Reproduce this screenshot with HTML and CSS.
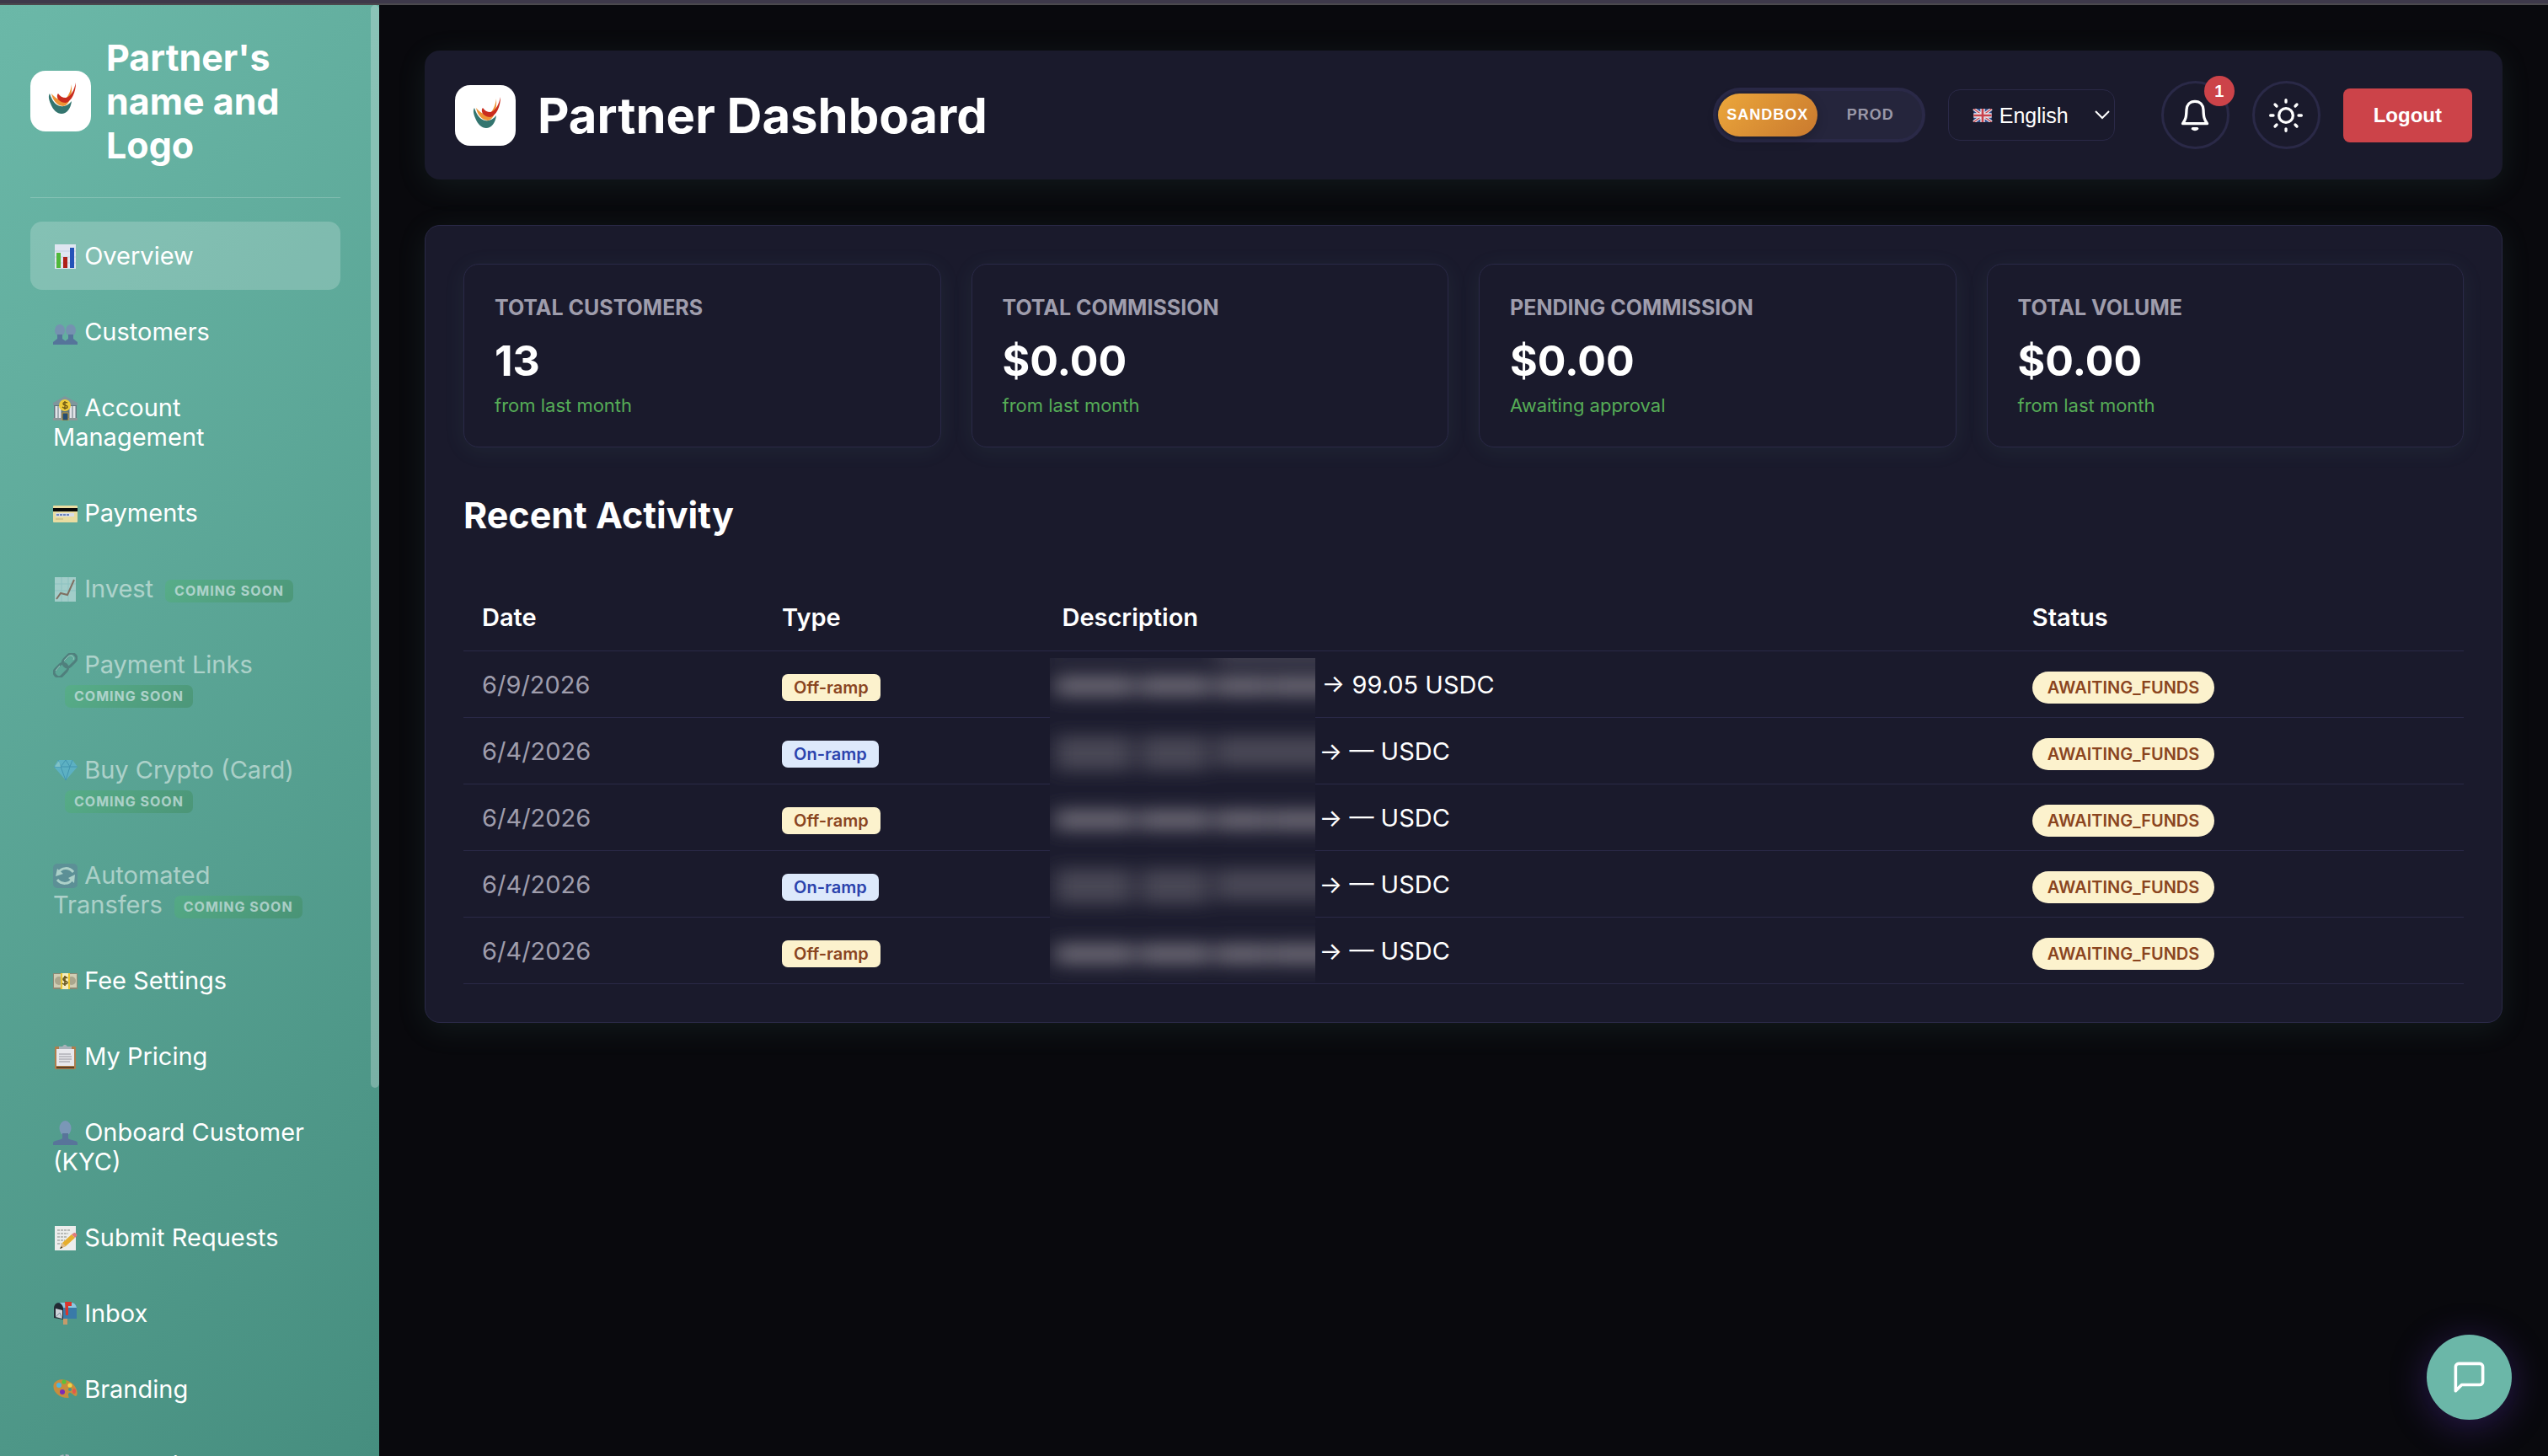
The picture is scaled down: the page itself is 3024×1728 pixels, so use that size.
FILE: index.html
```html
<!DOCTYPE html>
<html lang="en">

<head>
	<meta charset="UTF-8">
	<meta name="viewport" content="width=device-width, initial-scale=1.0">
	<title>Partner Dashboard</title>
	<link rel="stylesheet" href="styles.css">
</head>

<body>

	<div class="top-strip"></div>
	<div class="layout">

		<aside class="sidebar">
			<div class="brand">
				<svg class="logo" viewBox="0 0 72 72" aria-hidden="true">
					<rect width="72" height="72" rx="18" fill="#fff" />
					<path d="M23 27c-2 3-1 7 1 12 3 8 8 12 13 12 6 0 11-6 12-15-4 5-9 7-13 6-6-1-10-6-13-15z" fill="#34756f" />
					<path d="M25 27c1 6 6 15 14 15 7-1 11-12 10-26-1 8-4 15-9 19-6 0-11-3-15-8z" fill="#ee9335" />
					<path d="M33 27c-2 2-1 5 0 7 3 3 6 4 9 4 7-2 12-12 12-24-2 9-6 17-12 18-4 0-7-2-9-5z" fill="#c92c1e" />
				</svg>
				<h2>Partner's name and Logo</h2>
			</div>
			<nav class="nav">
				<a class="nav-item active" href="#overview"><svg class="icon" viewBox="0 0 29 29"><rect x="2" width="25" height="29" fill="#dfe6f1" /><path d="M2 8h25M2 15h25M2 22h25" stroke="#c5d0e2" /><rect x="4" y="10" width="5" height="18" fill="#50b83a" /><rect x="12" y="15" width="5" height="13" fill="#ae2018" /><rect x="20" y="4" width="5" height="24" fill="#2453b8" /></svg> Overview</a>
				<a class="nav-item" href="#customers"><svg class="icon" viewBox="0 0 29 29"><ellipse cx="8" cy="12" rx="6" ry="7" fill="#7592b0" /><ellipse cx="21" cy="12" rx="6" ry="7" fill="#7592b0" /><path d="M5 17h6v5l4 3v4H0v-3l5-4zM18 17h6v5l5 4v3H14v-4l4-3z" fill="#55749a" /></svg> Customers</a>
				<a class="nav-item" href="#accounts"><svg class="icon" viewBox="0 0 29 29"><path d="M14 0L0 8v3h29V8z" fill="#7f969c" /><path d="M1 11h27v15H1z" fill="#60757d" /><path d="M4 12v15M8 12v15M21 12v15M25 12v15" stroke="#e3e4e8" stroke-width="3" /><path d="M0 26h29v3H0z" fill="#8c9798" /><path d="M11 20h7v9h-7z" fill="#244d73" stroke="#c69a35" /><circle cx="14" cy="11" r="7" fill="#efcc3b" /><path d="M17 8c-2-1-5-1-5 1 0 3 5 1 5 4 0 2-4 2-6 0M14 6v10" fill="none" stroke="#705915" stroke-width="1.4" /></svg> Account Management</a>
				<a class="nav-item" href="#payments"><svg class="icon" viewBox="0 0 29 29"><rect y="5" width="29" height="20" rx="1" fill="#e9dca1" /><path d="M0 8h29v4H0z" fill="#080808" /><path d="M3 14h22v4H3z" fill="#d7dce9" /><path d="M4 16h15" stroke="#6c83bd" stroke-width="2" stroke-dasharray="3 1" /><path d="M3 21h9" stroke="#c5b378" /></svg> Payments</a>
				<a class="nav-item disabled" href="#invest"><svg class="icon" viewBox="0 0 29 29"><rect x="2" width="25" height="29" fill="#e5f2fa" /><path d="M2 8h25M2 16h25M10 0v29M18 0v29" stroke="#bddbe8" /><path d="M4 26l5-7 8 2 8-18" fill="none" stroke="#a0392d" stroke-width="2" /></svg> Invest<span class="soon">Coming soon</span></a>
				<a class="nav-item disabled" href="#links"><svg class="icon" viewBox="0 0 29 29"><g fill="none" stroke="#445963" stroke-width="3"><rect x="11" y="3" width="18" height="11" rx="5" transform="rotate(-45 20 9)" /><rect x="0" y="15" width="18" height="11" rx="5" transform="rotate(-45 9 20)" /></g><path d="M13 9l5-5c3-3 8 1 6 4M3 21l5-6" fill="none" stroke="#dde7e7" /></svg> Payment Links<span class="soon">Coming soon</span></a>
				<a class="nav-item disabled" href="#crypto"><svg class="icon" viewBox="0 0 29 29"><path d="M6 2h17l6 8-14 16L1 10z" fill="#5fbcf0" /><path d="M6 2l3 8 6-8 5 8 3-8M1 10h28M9 10l6 16 5-16" fill="none" stroke="#2b86ca" /><path d="M2 10l5-7 2 7z" fill="#a8e0f6" /></svg> Buy Crypto (Card)<span class="soon">Coming soon</span></a>
				<a class="nav-item disabled" href="#transfers"><svg class="icon" viewBox="0 0 29 29"><rect width="29" height="29" rx="5" fill="#607e99" /><path d="M6 11c4-7 13-7 18-1M23 18c-4 7-13 7-18 1" fill="none" stroke="#fff" stroke-width="3" /><path d="M3 15l2-9 7 6zM26 13l-1 10-7-6z" fill="#fff" /></svg> Automated Transfers<span class="soon">Coming soon</span></a>
				<a class="nav-item" href="#fees"><svg class="icon" viewBox="0 0 29 29"><rect y="5" width="29" height="19" fill="#8b8974" /><rect x="1" y="6" width="27" height="16" fill="#d1cdb4" /><circle cx="7" cy="14" r="5" fill="#aaa68d" /><circle cx="22" cy="14" r="5" fill="#aaa68d" /><path d="M10 5h9v19h-9z" fill="#f6edbd" /><path d="M10 5v19M19 5v19" stroke="#eac632" stroke-width="2" /><path d="M17 11c-2-2-5-1-5 1 0 3 5 2 5 4s-4 3-6 1M14 8v12" fill="none" stroke="#64531c" stroke-width="1.6" /></svg> Fee Settings</a>
				<a class="nav-item" href="#pricing"><svg class="icon" viewBox="0 0 29 29"><rect x="2" y="2" width="25" height="27" rx="1" fill="#ad7e4d" /><path d="M4 5h21v20H4z" fill="#e8e8ec" /><path d="M7 11h14M7 14h15M7 17h15M7 20h13" stroke="#bebec4" stroke-width="2" /><path d="M7 2h4l3-3 3 3h5v3H7z" fill="#a8b1b9" /><path d="M4 27h21" stroke="#604127" stroke-width="2" /></svg> My Pricing</a>
				<a class="nav-item" href="#onboard"><svg class="icon" viewBox="0 0 29 29"><ellipse cx="14.5" cy="9" rx="7" ry="9" fill="#7a97b7" /><path d="M11 15h7v6c1 2 10 2 11 5v3H0v-3c1-3 10-3 11-5z" fill="#58749a" /></svg> Onboard Customer (KYC)</a>
				<a class="nav-item" href="#requests"><svg class="icon" viewBox="0 0 29 29"><rect x="2" width="25" height="29" fill="#ecedec" /><path d="M5 5h15M5 9h13M5 13h12M5 17h9M5 21h5" stroke="#858985" stroke-dasharray="3 1" /><path d="M8 27l3-7 11-10 4 4-11 10z" fill="#e6ae2e" /><path d="M8 27l3-7 4 4z" fill="#dfbb8a" /><path d="M8 27l2-3 1 2z" fill="#302c28" /><path d="M22 10l3-2c2 0 4 2 3 4l-2 2z" fill="#df7a7a" /></svg> Submit Requests</a>
				<a class="nav-item" href="#inbox"><svg class="icon" viewBox="0 0 29 29"><path d="M12 19h5v8h-5z" fill="#c49b6b" /><path d="M6 1h16c4 0 6 4 6 7v12H11z" fill="#397aa8" /><path d="M8 1h14c3 0 5 2 6 6H12z" fill="#8dc8df" /><path d="M1 19V8c0-9 10-9 11 0v13z" fill="#222b34" /><path d="M3 8l8 2v10l-8-2z" fill="#cdd3d9" /><path d="M3 18l5-5 3 7" fill="none" stroke="#81909d" /><path d="M14 0h8v5h-4v11h-3z" fill="#d9362d" /></svg> Inbox</a>
				<a class="nav-item" href="#branding"><svg class="icon" viewBox="0 0 29 29"><path d="M1 7C5 0 17 1 24 8c5 5 6 13 3 14-3 0-5-5-8-4-3 2 2 7-2 6C7 24-2 16 1 7z" fill="#c78d3d" /><circle cx="20" cy="14" r="2" fill="#49958a" /><circle cx="7" cy="9" r="3" fill="#50b6e0" /><circle cx="13" cy="5" r="2.6" fill="#58c13c" /><circle cx="20" cy="9" r="2.6" fill="#eed447" /><circle cx="11" cy="17" r="3" fill="#7c28b8" /><ellipse cx="25" cy="16" rx="2" ry="3" fill="#e4584c" /></svg> Branding</a>
				<a class="nav-item" href="#settings"><svg class="icon" viewBox="0 0 29 29"><circle cx="14.5" cy="14.5" r="11.5" fill="none" stroke="#a9b2bc" stroke-width="4" stroke-dasharray="4 2" /><circle cx="14.5" cy="14.5" r="8" fill="none" stroke="#8b96a3" stroke-width="4" /></svg> My Settings</a>
			</nav>
			<div class="scroll-thumb"></div>
		</aside>

		<main class="main">
			<header class="header">
				<svg class="logo" viewBox="0 0 72 72" aria-hidden="true">
					<rect width="72" height="72" rx="18" fill="#fff" />
					<path d="M23 27c-2 3-1 7 1 12 3 8 8 12 13 12 6 0 11-6 12-15-4 5-9 7-13 6-6-1-10-6-13-15z" fill="#34756f" />
					<path d="M25 27c1 6 6 15 14 15 7-1 11-12 10-26-1 8-4 15-9 19-6 0-11-3-15-8z" fill="#ee9335" />
					<path d="M33 27c-2 2-1 5 0 7 3 3 6 4 9 4 7-2 12-12 12-24-2 9-6 17-12 18-4 0-7-2-9-5z" fill="#c92c1e" />
				</svg>
				<h1>Partner Dashboard</h1>
				<div class="controls">
					<div class="env-toggle">
						<button class="env selected" type="button">SANDBOX</button>
						<button class="env" type="button">PROD</button>
					</div>
					<div class="language">
						<svg class="flag" viewBox="0 0 24 18" aria-hidden="true">
							<rect width="24" height="18" rx="2" fill="#34508f" />
							<path d="M0 0l24 18M24 0L0 18" stroke="#e9e9ef" stroke-width="4" />
							<path d="M0 0l24 18M24 0L0 18" stroke="#c8434b" stroke-width="1.5" />
							<path d="M12 0v18M0 9h24" stroke="#e9e9ef" stroke-width="6" />
							<path d="M12 0v18M0 9h24" stroke="#c8434b" stroke-width="3" />
						</svg>
						<select id="language" aria-label="Language">
							<option>English</option>
						</select>
						<svg class="chevron" viewBox="0 0 18 12" aria-hidden="true"><path d="M1 1l8 8 8-8" fill="none" stroke="#fff" stroke-width="2" /></svg>
					</div>
					<button class="round" type="button" aria-label="Notifications">
						<svg width="40" height="40" viewBox="0 0 24 24" fill="none" stroke="#fff" stroke-width="2" stroke-linecap="round" stroke-linejoin="round">
							<path d="M12 2C8.300 2 6.200 4.600 6 8c-.2 5-.4 6.500-2.700 9.800h17.400C18.400 14.500 18.200 13 18 8c-.2-3.400-2.300-6-6-6z" />
							<path d="M10.400 21.400c.8.800 2.400.8 3.200 0z" fill="#fff" />
						</svg>
						<span class="count">1</span>
					</button>
					<button class="round" type="button" aria-label="Toggle theme">
						<svg width="40" height="40" viewBox="0 0 24 24" fill="none" stroke="#fff" stroke-width="2" stroke-linecap="round">
							<circle cx="12" cy="12" r="5" />
							<path d="M12 1v1.500M12 21.500V23M1 12h2M21 12h2M4.200 4.200l1.200 1.200M18.600 18.600l1.200 1.200M4.200 19.800l1.200-1.200M18.600 5.400l1.200-1.200" />
						</svg>
					</button>
					<button class="logout" type="button">Logout</button>
				</div>
			</header>

			<section class="panel">
				<div class="stats">
					<div class="stat">
						<h3>Total Customers</h3>
						<p class="value">13</p>
						<p class="note">from last month</p>
					</div>
					<div class="stat">
						<h3>Total Commission</h3>
						<p class="value">$0.00</p>
						<p class="note">from last month</p>
					</div>
					<div class="stat">
						<h3>Pending Commission</h3>
						<p class="value">$0.00</p>
						<p class="note">Awaiting approval</p>
					</div>
					<div class="stat">
						<h3>Total Volume</h3>
						<p class="value">$0.00</p>
						<p class="note">from last month</p>
					</div>
				</div>

				<h2>Recent Activity</h2>
				<table class="activity">
					<thead>
						<tr>
							<th class="col-date">Date</th>
							<th class="col-type">Type</th>
							<th class="col-description">Description</th>
							<th class="col-status">Status</th>
						</tr>
					</thead>
					<tbody>
						<tr>
							<td class="date">6/9/2026</td>
							<td><span class="tag off">Off-ramp</span></td>
							<td class="masked">
								<svg class="mask" viewBox="0 0 315 385" aria-hidden="true">
									<defs>
										<filter id="soft" x="-20%" y="-20%" width="140%" height="140%"><feGaussianBlur stdDeviation="12 10" /></filter>
										<g id="strong"><rect x="6" width="94" height="26" /><rect x="106" width="84" height="26" /><rect x="196" width="64" height="26" /><rect x="262" width="90" height="26" /></g>
										<g id="faint"><rect x="6" width="92" height="42" /><rect x="108" width="80" height="42" /><rect x="196" width="150" height="38" /><rect x="290" width="60" height="30" /></g>
									</defs>
									<rect width="315" height="385" fill="#1d1d2f" />
									<g filter="url(#soft)" fill="#66646f">
										<rect x="-10" y="-20" width="200" height="24" opacity="0.2" />
										<rect x="196" y="-20" width="150" height="28" opacity="0.5" />
										<use href="#strong" y="20" />
										<use href="#faint" y="92" opacity="0.6" />
										<use href="#strong" y="179" />
										<use href="#faint" y="250" opacity="0.6" />
										<use href="#strong" y="338" />
									</g>
								</svg>
								<span class="gap long"></span> → 99.05 USDC
							</td>
							<td><span class="status">AWAITING_FUNDS</span></td>
						</tr>
						<tr>
							<td class="date">6/4/2026</td>
							<td><span class="tag on">On-ramp</span></td>
							<td><span class="gap"></span> → — USDC</td>
							<td><span class="status">AWAITING_FUNDS</span></td>
						</tr>
						<tr>
							<td class="date">6/4/2026</td>
							<td><span class="tag off">Off-ramp</span></td>
							<td><span class="gap"></span> → — USDC</td>
							<td><span class="status">AWAITING_FUNDS</span></td>
						</tr>
						<tr>
							<td class="date">6/4/2026</td>
							<td><span class="tag on">On-ramp</span></td>
							<td><span class="gap"></span> → — USDC</td>
							<td><span class="status">AWAITING_FUNDS</span></td>
						</tr>
						<tr>
							<td class="date">6/4/2026</td>
							<td><span class="tag off">Off-ramp</span></td>
							<td><span class="gap"></span> → — USDC</td>
							<td><span class="status">AWAITING_FUNDS</span></td>
						</tr>
					</tbody>
				</table>
			</section>
		</main>
	</div>

	<button class="chat" type="button" aria-label="Open chat">
		<svg width="43" height="43" viewBox="0 0 24 24" fill="none" stroke="#fff" stroke-width="2" stroke-linecap="round" stroke-linejoin="round">
			<path d="M21 15a2 2 0 0 1-2 2H7l-4 4V5a2 2 0 0 1 2-2h14a2 2 0 0 1 2 2z" />
		</svg>
	</button>

</body>

</html>
```

FILE: styles.css
```css
* {
	box-sizing: border-box;
}

body {
	margin: 0;
	height: 100vh;
	display: flex;
	flex-direction: column;
	overflow: hidden;
	background-color: #09090d;
	color: #fff;
	font-family: Inter, sans-serif;
	font-size: 29px;
	line-height: 35px;
}

h1,
h2,
h3,
p {
	margin: 0;
}

button,
select {
	font-family: "Liberation Sans", Arial, sans-serif;
	color: #fff;
	cursor: pointer;
}

.top-strip {
	flex: none;
	height: 6px;
	background-color: #3e394a;
	border-bottom: 2px solid #4b494d;
}

.layout {
	flex: 1;
	min-height: 0;
	display: flex;
}

.logo {
	flex: none;
	width: 72px;
	height: 72px;
}

/* sidebar */

.sidebar {
	flex: none;
	position: relative;
	width: 450px;
	padding: 36px 46px 0 36px;
	overflow: hidden;
	background: linear-gradient(135deg, #6bb8a8 0%, #468e7f 100%);
}

.brand {
	display: flex;
	align-items: center;
	gap: 18px;
	padding-bottom: 36px;
	margin-bottom: 28px;
	border-bottom: 1px solid rgba(255, 255, 255, 0.2);
}

.brand h2 {
	font-size: 43px;
	line-height: 52px;
}

.nav-item {
	display: block;
	padding: 23px 27px;
	margin-bottom: 9px;
	border-radius: 14px;
	color: #fff;
	text-decoration: none;
}

.nav-item.active {
	background-color: rgba(255, 255, 255, 0.2);
}

.nav-item.disabled {
	opacity: 0.5;
}

.icon {
	width: 29px;
	height: 29px;
	vertical-align: -5px;
}

.soon {
	display: inline-block;
	vertical-align: middle;
	margin-left: 14px;
	padding: 3px 11px;
	border-radius: 7px;
	background: linear-gradient(135deg, #54b47c, #418c60);
	font-size: 16px;
	line-height: 21px;
	font-weight: 700;
	letter-spacing: 1px;
	text-transform: uppercase;
}

.scroll-thumb {
	position: absolute;
	top: 0;
	right: 0;
	width: 10px;
	height: 74.6%;
	border-radius: 5px;
	background-color: rgba(255, 255, 255, 0.25);
}

/* header */

.main {
	flex: 1;
	min-width: 0;
	padding: 54px;
}

.header {
	display: flex;
	align-items: center;
	gap: 26px;
	padding: 36px;
	margin-bottom: 54px;
	border-radius: 18px;
	background-color: #1a1a2c;
	box-shadow: 0 7px 36px rgba(107, 184, 168, 0.1);
}

.header h1 {
	font-size: 58px;
	line-height: 70px;
}

.controls {
	display: flex;
	align-items: center;
	gap: 27px;
	margin-left: auto;
}

.env-toggle {
	display: grid;
	grid-template-columns: 1fr 1fr;
	gap: 4px;
	width: 252px;
	padding: 3px 2px;
	border: 4px solid #2a2947;
	border-radius: 36px;
	background-color: #25253c;
}

.env {
	padding: 0;
	border: none;
	border-radius: 26px;
	background: none;
	color: #9a98a8;
	font-size: 18px;
	line-height: 51px;
	font-weight: 700;
	letter-spacing: 1px;
}

.env.selected {
	background: linear-gradient(135deg, #eca73b, #c9792e);
	box-shadow: 0 4px 14px rgba(0, 0, 0, 0.2);
	color: #fff;
}

.language {
	position: relative;
	margin-right: 28px;
}

.language select {
	appearance: none;
	display: block;
	width: 198px;
	height: 61px;
	padding: 0 50px 0 60px;
	border: 1px solid #2a2947;
	border-radius: 14px;
	background-color: transparent;
	font-size: 25px;
}

.language select option {
	background-color: #1a1a2c;
}

.flag {
	position: absolute;
	top: 23px;
	left: 29px;
	width: 24px;
	height: 16px;
}

.chevron {
	position: absolute;
	top: 25px;
	right: 6px;
	width: 18px;
	height: 12px;
	pointer-events: none;
}

.round {
	position: relative;
	display: flex;
	align-items: center;
	justify-content: center;
	width: 81px;
	height: 81px;
	padding: 0;
	border: 3px solid #2a2947;
	border-radius: 50%;
	background: none;
}

.count {
	position: absolute;
	top: -9px;
	right: -9px;
	width: 36px;
	height: 36px;
	border-radius: 50%;
	background-color: #cc4349;
	font-size: 20px;
	line-height: 36px;
	font-weight: 700;
}

.logout {
	padding: 14px 36px;
	border: none;
	border-radius: 8px;
	background-color: #cc4349;
	font-size: 24px;
	line-height: 36px;
	font-weight: 700;
}

/* overview */

.panel {
	padding: 45px;
	border: 1px solid #2a2947;
	border-radius: 18px;
	background-color: #1a1a2c;
	box-shadow: 0 7px 36px rgba(107, 184, 168, 0.1);
}

.stats {
	display: grid;
	grid-template-columns: repeat(4, 1fr);
	gap: 36px;
	margin-bottom: 54px;
}

.stat {
	padding: 36px;
	border: 1px solid #2a2947;
	border-radius: 18px;
	background-color: #1a1a2c;
	box-shadow: 0 4px 27px rgba(107, 184, 168, 0.08);
}

.stat h3 {
	margin-bottom: 18px;
	color: #9f9dac;
	font-size: 25px;
	line-height: 30px;
	font-weight: 700;
	text-transform: uppercase;
}

.value {
	margin-bottom: 9px;
	font-size: 50px;
	line-height: 61px;
	font-weight: 700;
}

.note {
	color: #56ad57;
	font-size: 22px;
	line-height: 26px;
}

.panel h2 {
	margin-bottom: 56px;
	font-size: 43px;
	line-height: 52px;
}

.activity {
	width: 100%;
	table-layout: fixed;
	border-collapse: collapse;
}

.activity th,
.activity td {
	padding: 22px;
	border-bottom: 1px solid #2a2947;
	text-align: left;
}

.activity td {
	padding-bottom: 21px;
}

.activity th {
	font-weight: 600;
}

.col-date {
	width: 15%;
}

.col-type {
	width: 14%;
}

.col-status {
	width: 22.5%;
}

.activity .date {
	color: #9f9dac;
}

.tag,
.status {
	font-size: 20px;
	line-height: 20px;
	font-weight: 600;
}

.tag {
	padding: 4px 14px;
	border-radius: 7px;
}

.tag.off {
	background-color: #fcf2cd;
	color: #8a451f;
}

.tag.on {
	background-color: #dde9fb;
	color: #2b43ad;
}

.status {
	padding: 7px 18px;
	border-radius: 20px;
	background-color: #fcf2cd;
	color: #8a451f;
}

/* account names are blurred out across all rows */

.masked {
	position: relative;
}

.mask {
	position: absolute;
	top: 8px;
	left: 8px;
	width: 315px;
	height: 385px;
}

.gap {
	display: inline-block;
	width: 297px;
}

.gap.long {
	width: 300px;
}

.chat {
	position: fixed;
	right: 43px;
	bottom: 43px;
	display: flex;
	align-items: center;
	justify-content: center;
	width: 101px;
	height: 101px;
	padding: 0;
	border: none;
	border-radius: 50%;
	background-color: #6bb7a8;
	box-shadow: 0 7px 44px rgba(90, 50, 180, 0.4);
}
```
